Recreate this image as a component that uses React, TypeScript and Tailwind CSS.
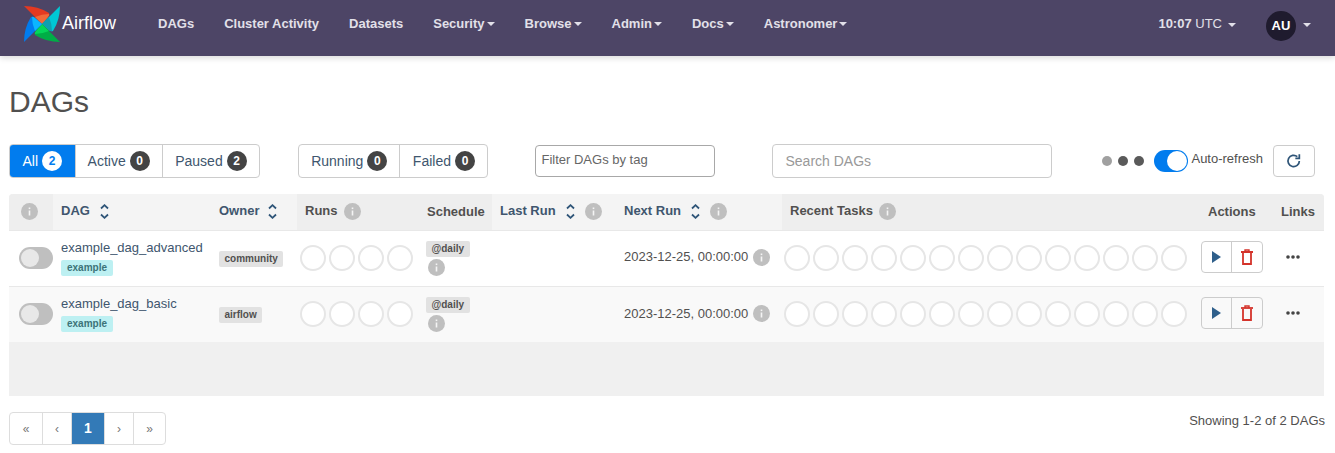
import React from "react";

const Blade = ({ rot, main, inner }: { rot: number; main: string; inner: string }) => (
  <g transform={`rotate(${rot} 19 19)`}>
    <path d="M19 19 L1 1 Q15 1 26 8 Q27 10 25 12Z" fill={main} />
    <path d="M19 19 L12 12 Q19 9 26 9 Q27 10 25 12Z" fill={inner} />
  </g>
);

const Logo = () => (
  <svg width="38" height="38" viewBox="0 0 38 38" className="shrink-0">
    <Blade rot={0} main="#e43921" inner="#f06a3a" />
    <Blade rot={90} main="#00c7d4" inner="#0f9fb0" />
    <Blade rot={180} main="#00ad46" inner="#04d659" />
    <Blade rot={270} main="#017cee" inner="#0cb6ff" />
  </svg>
);

const Caret = ({ className = "" }: { className?: string }) => (
  <span className={`inline-block w-0 h-0 border-x-[4px] border-x-transparent border-t-[4px] border-t-current ${className}`} />
);

const Info = () => (
  <svg width="17" height="17" viewBox="0 0 17 17" className="block shrink-0">
    <circle cx="8.5" cy="8.5" r="8.5" fill="#bfbfbf" />
    <rect x="7.7" y="7.5" width="1.6" height="5" fill="#f4f4f4" />
    <rect x="7.7" y="4.5" width="1.6" height="1.6" fill="#f4f4f4" />
  </svg>
);

const Sort = () => (
  <svg width="9" height="15" viewBox="0 0 9 15" className="block shrink-0 -mt-[1px]" fill="none" stroke="#2f5578" strokeWidth="1.8">
    <path d="M1 4.5 L4.5 1.2 L8 4.5" />
    <path d="M1 10.5 L4.5 13.8 L8 10.5" />
  </svg>
);

const Circles = ({ n }: { n: number }) => (
  <div className="flex gap-[3px]">
    {Array.from({ length: n }).map((_, i) => (
      <span key={i} className="w-[26px] h-[26px] rounded-full border-2 border-[#e6e6e6] bg-white shrink-0" />
    ))}
  </div>
);

const Pill = ({ label, count, active, light, wide }: { label: string; count: number; active?: boolean; light?: boolean; wide?: boolean }) => (
  <div className={`flex items-center gap-[4px] h-[34px] ${wide ? "px-[12.5px]" : "px-[12px]"} text-[14px] border-l first:border-l-0 border-[#cccccc] ${active ? "bg-[#017cee] text-white" : ""}`}>
    <span className={active ? "" : "text-[#40566e]"}>{label}</span>
    <span className={`min-w-[20px] h-[20px] rounded-full flex items-center justify-center text-[12px] font-bold ${light ? "bg-white text-[#017cee]" : "bg-[#444444] text-white"}`}>{count}</span>
  </div>
);

const Toggle = () => (
  <div className="w-[34px] h-[22px] rounded-full bg-[#bfbfbf] flex items-center pl-[2px]">
    <div className="w-[18px] h-[18px] rounded-full bg-[#e8e8e8]" />
  </div>
);

const nav = ["DAGs", "Cluster Activity", "Datasets"];
const navDrop = ["Security", "Browse", "Admin", "Docs", "Astronomer"];

const Tag = ({ children, className = "" }: { children: React.ReactNode; className?: string }) => (
  <span className={`block w-fit h-[16px] leading-[16px] rounded-[2px] text-[10px] font-bold ${className}`}>{children}</span>
);

const Row = ({ name, owner, alt }: { name: string; owner: string; alt?: boolean }) => (
  <tr className={`h-[56px] border-t border-[#e8e8e8] ${alt ? "bg-[#f9f9f9]" : "bg-white"}`}>
    <td className="pl-[10px]"><Toggle /></td>
    <td className="pl-[8px]">
      <div className="-mt-[1px]">
        <div className="text-[13px] leading-[18px] text-[#40566e]">{name}</div>
        <Tag className="mt-[3px] px-[6px] bg-[#bdf0f2] text-[#3c7378]">example</Tag>
      </div>
    </td>
    <td className="pl-[8px]">
      <Tag className="mt-[1px] px-[5.5px] bg-[#e2e2e2]">{owner}</Tag>
    </td>
    <td className="pl-[3px]"><Circles n={4} /></td>
    <td className="pl-[7px]">
      <Tag className="px-[5.5px] bg-[#e2e2e2]">@daily</Tag>
      <div className="mt-[2px] ml-[2px]"><Info /></div>
    </td>
    <td />
    <td className="pl-[8px]">
      <div className="flex items-center gap-[5px] text-[13px] -mt-[2px]">2023-12-25, 00:00:00 <Info /></div>
    </td>
    <td className="pl-[2px]"><Circles n={14} /></td>
    <td className="pl-[1px]">
      <div className="flex w-[62px] h-[32px] border border-[#cccccc] rounded-[4px] -mt-[3px]">
        <div className="w-[30px] flex items-center justify-center border-r border-[#cccccc]">
          <svg width="11" height="14" viewBox="0 0 11 14"><path d="M1 1 L10 7 L1 13Z" fill="#2f5f8b" /></svg>
        </div>
        <div className="flex-1 flex items-center justify-center">
          <svg width="12" height="16" viewBox="0 0 12 16" fill="none" stroke="#d4332b" strokeWidth="1.8">
            <path d="M0 3 H12" />
            <path d="M4 3 V1 H8 V3" strokeWidth="1.4" />
            <path d="M2 4 V15 H10 V4" />
          </svg>
        </div>
      </div>
    </td>
    <td className="pl-[12px]">
      <svg width="16" height="6" viewBox="0 0 16 6" className="block -mt-[3px]" fill="#444444">
        <circle cx="3" cy="3" r="1.8" /><circle cx="8" cy="3" r="1.8" /><circle cx="13" cy="3" r="1.8" />
      </svg>
    </td>
  </tr>
);

const HeadText = ({ children }: { children: React.ReactNode }) => <span className="-mt-[2px]">{children}</span>;

const pages = [
  { t: "«", w: "w-[32px]" },
  { t: "‹", w: "w-[29px]" },
  { t: "1", w: "w-[33px]" },
  { t: "›", w: "w-[29px]" },
  { t: "»", w: "w-[32px]" },
];

export default function App() {
  return (
    <div className="w-[1335px] h-[453px] overflow-hidden bg-white text-[#51504f]" style={{ fontFamily: '"Liberation Sans", Arial, sans-serif' }}>
      <header className="h-[56px] bg-[#4d4566] flex items-center text-[#e2e0e9] shadow-[0_2px_6px_rgba(0,0,0,0.15)]">
        <div className="flex items-center ml-[23px] w-[135px] -mt-[8px]">
          <Logo />
          <span className="ml-[1px] text-[18px] text-white -mt-[1px]">Airflow</span>
        </div>
        <nav className="flex items-center gap-[30px] text-[13px] font-bold -mt-[8px]">
          {nav.map((n) => <span key={n}>{n}</span>)}
          {navDrop.map((n) => (
            <span key={n} className="flex items-center gap-[2px]">{n}<Caret /></span>
          ))}
        </nav>
        <div className="ml-auto flex items-center -mt-[4px]">
          <span className="text-[13px] -mt-[4px]"><b>10:07</b> UTC</span>
          <Caret className="ml-[6px] mr-[30px] -mt-[3px]" />
          <span className="w-[30px] h-[30px] rounded-full bg-[#1f1b2e] text-white text-[13px] font-bold flex items-center justify-center">AU</span>
          <Caret className="ml-[7px] mr-[24px] -mt-[3px]" />
        </div>
      </header>

      <main className="px-[9px]">
        <h1 className="text-[30px] leading-[36px] pt-[28px]">DAGs</h1>

        <div className="flex items-center mt-[24px] h-[34px]">
          <div className="flex rounded-[4px] border border-[#cccccc] overflow-hidden h-[34px] items-center">
            <Pill label="All" count={2} active light wide />
            <Pill label="Active" count={0} />
            <Pill label="Paused" count={2} wide />
          </div>
          <div className="flex rounded-[4px] border border-[#cccccc] overflow-hidden ml-[38px] h-[34px] items-center">
            <Pill label="Running" count={0} />
            <Pill label="Failed" count={0} wide />
          </div>
          <div className="ml-[47px] w-[180px] h-[32px] border border-[#a8a8a8] rounded-[4px] flex items-center pl-[5px] pb-[2px] text-[13px] text-[#666666]">Filter DAGs by tag</div>
          <div className="ml-[57px] w-[280px] h-[34px] border border-[#cccccc] rounded-[4px] flex items-center pl-[12px] text-[14px] text-[#999999]">Search DAGs</div>
          <div className="ml-[50px] flex items-center gap-[6px]">
            <span className="w-[10px] h-[10px] rounded-full bg-[#a0a0a0]" />
            <span className="w-[10px] h-[10px] rounded-full bg-[#5a5a5a]" />
            <span className="w-[10px] h-[10px] rounded-full bg-[#5a5a5a]" />
          </div>
          <div className="ml-[10px] w-[34px] h-[22px] rounded-full bg-[#017cee] flex items-center justify-end pr-[1px]">
            <div className="w-[20px] h-[20px] rounded-full bg-white" />
          </div>
          <span className="ml-[3px] text-[13px] -mt-[4px]">Auto-refresh</span>
          <div className="ml-[10px] w-[42px] h-[32px] border border-[#cccccc] rounded-[4px] flex items-center justify-center">
            <svg width="16" height="16" viewBox="0 0 24 24" fill="none" stroke="#2f5578" strokeWidth="2.6">
              <path d="M20 12 A8.5 8.5 0 1 1 17 5.5" />
              <path d="M20 2 V8 H14" />
            </svg>
          </div>
        </div>

        <div className="mt-[16px] bg-[#f0f0f0] rounded-t-[4px] h-[202px] w-[1315px] overflow-hidden">
          <table className="table-fixed border-collapse w-[1315px] text-left">
            <colgroup>
              <col className="w-[44px]" /><col className="w-[158px]" /><col className="w-[86px]" /><col className="w-[122px]" /><col className="w-[73px]" />
              <col className="w-[124px]" /><col className="w-[166px]" /><col className="w-[418px]" /><col className="w-[73px]" /><col className="w-[51px]" />
            </colgroup>
            <thead>
              <tr className="h-[36px] text-[13px] font-bold">
                <th className="pl-[12px] bg-[#eeeeee]"><Info /></th>
                <th className="pl-[8px] bg-[#f4f4f4] text-[#40566e]"><span className="flex items-center gap-[10px]"><HeadText>DAG</HeadText><Sort /></span></th>
                <th className="pl-[8px] bg-[#f4f4f4] text-[#40566e]"><span className="flex items-center gap-[9px]"><HeadText>Owner</HeadText><Sort /></span></th>
                <th className="pl-[8px] bg-[#eeeeee]"><span className="flex items-center gap-[6px]"><HeadText>Runs</HeadText><Info /></span></th>
                <th className="pl-[8px] bg-[#eeeeee]">Schedule</th>
                <th className="pl-[8px] bg-[#f4f4f4] text-[#40566e]"><span className="flex items-center gap-[10px]"><HeadText>Last Run</HeadText><Sort /><Info /></span></th>
                <th className="pl-[8px] bg-[#f4f4f4] text-[#40566e]"><span className="flex items-center gap-[10px]"><HeadText>Next Run</HeadText><Sort /><Info /></span></th>
                <th className="pl-[8px] bg-[#eeeeee]"><span className="flex items-center gap-[6px]"><HeadText>Recent Tasks</HeadText><Info /></span></th>
                <th className="pl-[8px] bg-[#eeeeee]">Actions</th>
                <th className="pl-[8px] bg-[#eeeeee]">Links</th>
              </tr>
            </thead>
            <tbody>
              <Row name="example_dag_advanced" owner="community" />
              <Row name="example_dag_basic" owner="airflow" alt />
            </tbody>
          </table>
        </div>

        <div className="flex justify-between mt-[16px]">
          <div className="flex h-[33px] border border-[#dddddd] rounded-[4px] text-[12px] text-[#777777] overflow-hidden">
            {pages.map(({ t, w }) => (
              <span key={t} className={`${w} flex items-center justify-center border-l first:border-l-0 border-[#dddddd] ${t === "1" ? "bg-[#337ab7] text-white text-[14px] font-bold" : ""}`}>{t}</span>
            ))}
          </div>
          <span className="text-[13px] leading-[18px] mr-[1px]">Showing 1-2 of 2 DAGs</span>
        </div>
      </main>
    </div>
  );
}
